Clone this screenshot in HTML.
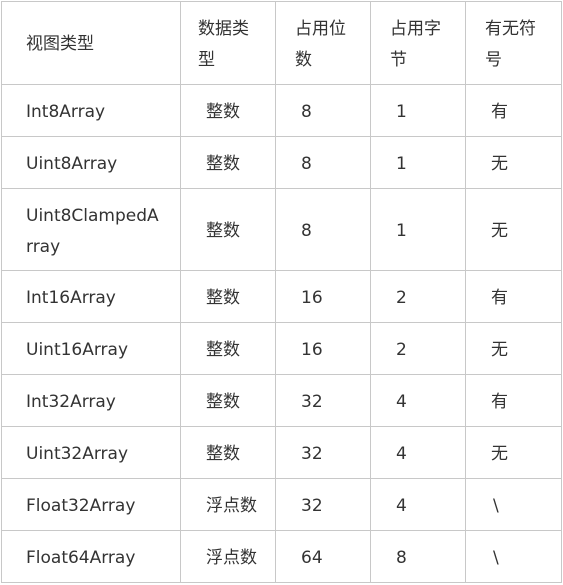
<!DOCTYPE html>
<html><head><meta charset="utf-8"><style>
body{margin:0;width:563px;height:585px;background:#fff;position:relative;overflow:hidden;font-family:"DejaVu Sans","Noto Sans CJK SC",sans-serif;font-size:17px;color:#333}
.h{position:absolute;left:1px;width:561px;height:1px;background:#c8c8c8}
.v{position:absolute;top:1px;height:582px;width:1px;background:#c8c8c8}
.t{position:absolute;line-height:31px;white-space:nowrap;margin-top:2px}
</style></head><body>
<div class="h" style="top:1px"></div><div class="h" style="top:84px"></div><div class="h" style="top:136px"></div><div class="h" style="top:188px"></div><div class="h" style="top:270px"></div><div class="h" style="top:322px"></div><div class="h" style="top:374px"></div><div class="h" style="top:426px"></div><div class="h" style="top:478px"></div><div class="h" style="top:530px"></div><div class="h" style="top:582px"></div>
<div class="v" style="left:1px"></div><div class="v" style="left:180px"></div><div class="v" style="left:275px"></div><div class="v" style="left:370px"></div><div class="v" style="left:465px"></div><div class="v" style="left:561px"></div>

<div class="t" style="left:26px;top:27px">视图类型</div>
<div class="t" style="left:198px;top:12px">数据类<br>型</div>
<div class="t" style="left:295px;top:12px">占用位<br>数</div>
<div class="t" style="left:390px;top:12px">占用字<br>节</div>
<div class="t" style="left:485px;top:12px">有无符<br>号</div>

<div class="t" style="left:26px;top:95px">Int8Array</div><div class="t" style="left:206px;top:95px">整数</div><div class="t" style="left:301px;top:95px">8</div><div class="t" style="left:396px;top:95px">1</div><div class="t" style="left:491px;top:95px">有</div>
<div class="t" style="left:26px;top:147px">Uint8Array</div><div class="t" style="left:206px;top:147px">整数</div><div class="t" style="left:301px;top:147px">8</div><div class="t" style="left:396px;top:147px">1</div><div class="t" style="left:491px;top:147px">无</div>
<div class="t" style="left:26px;top:199px">Uint8ClampedA<br>rray</div><div class="t" style="left:206px;top:214px">整数</div><div class="t" style="left:301px;top:214px">8</div><div class="t" style="left:396px;top:214px">1</div><div class="t" style="left:491px;top:214px">无</div>
<div class="t" style="left:26px;top:281px">Int16Array</div><div class="t" style="left:206px;top:281px">整数</div><div class="t" style="left:301px;top:281px">16</div><div class="t" style="left:396px;top:281px">2</div><div class="t" style="left:491px;top:281px">有</div>
<div class="t" style="left:26px;top:333px">Uint16Array</div><div class="t" style="left:206px;top:333px">整数</div><div class="t" style="left:301px;top:333px">16</div><div class="t" style="left:396px;top:333px">2</div><div class="t" style="left:491px;top:333px">无</div>
<div class="t" style="left:26px;top:385px">Int32Array</div><div class="t" style="left:206px;top:385px">整数</div><div class="t" style="left:301px;top:385px">32</div><div class="t" style="left:396px;top:385px">4</div><div class="t" style="left:491px;top:385px">有</div>
<div class="t" style="left:26px;top:437px">Uint32Array</div><div class="t" style="left:206px;top:437px">整数</div><div class="t" style="left:301px;top:437px">32</div><div class="t" style="left:396px;top:437px">4</div><div class="t" style="left:491px;top:437px">无</div>
<div class="t" style="left:26px;top:489px">Float32Array</div><div class="t" style="left:206px;top:489px">浮点数</div><div class="t" style="left:301px;top:489px">32</div><div class="t" style="left:396px;top:489px">4</div><div class="t" style="left:493px;top:489px">\</div>
<div class="t" style="left:26px;top:541px">Float64Array</div><div class="t" style="left:206px;top:541px">浮点数</div><div class="t" style="left:301px;top:541px">64</div><div class="t" style="left:396px;top:541px">8</div><div class="t" style="left:493px;top:541px">\</div>
</body></html>
